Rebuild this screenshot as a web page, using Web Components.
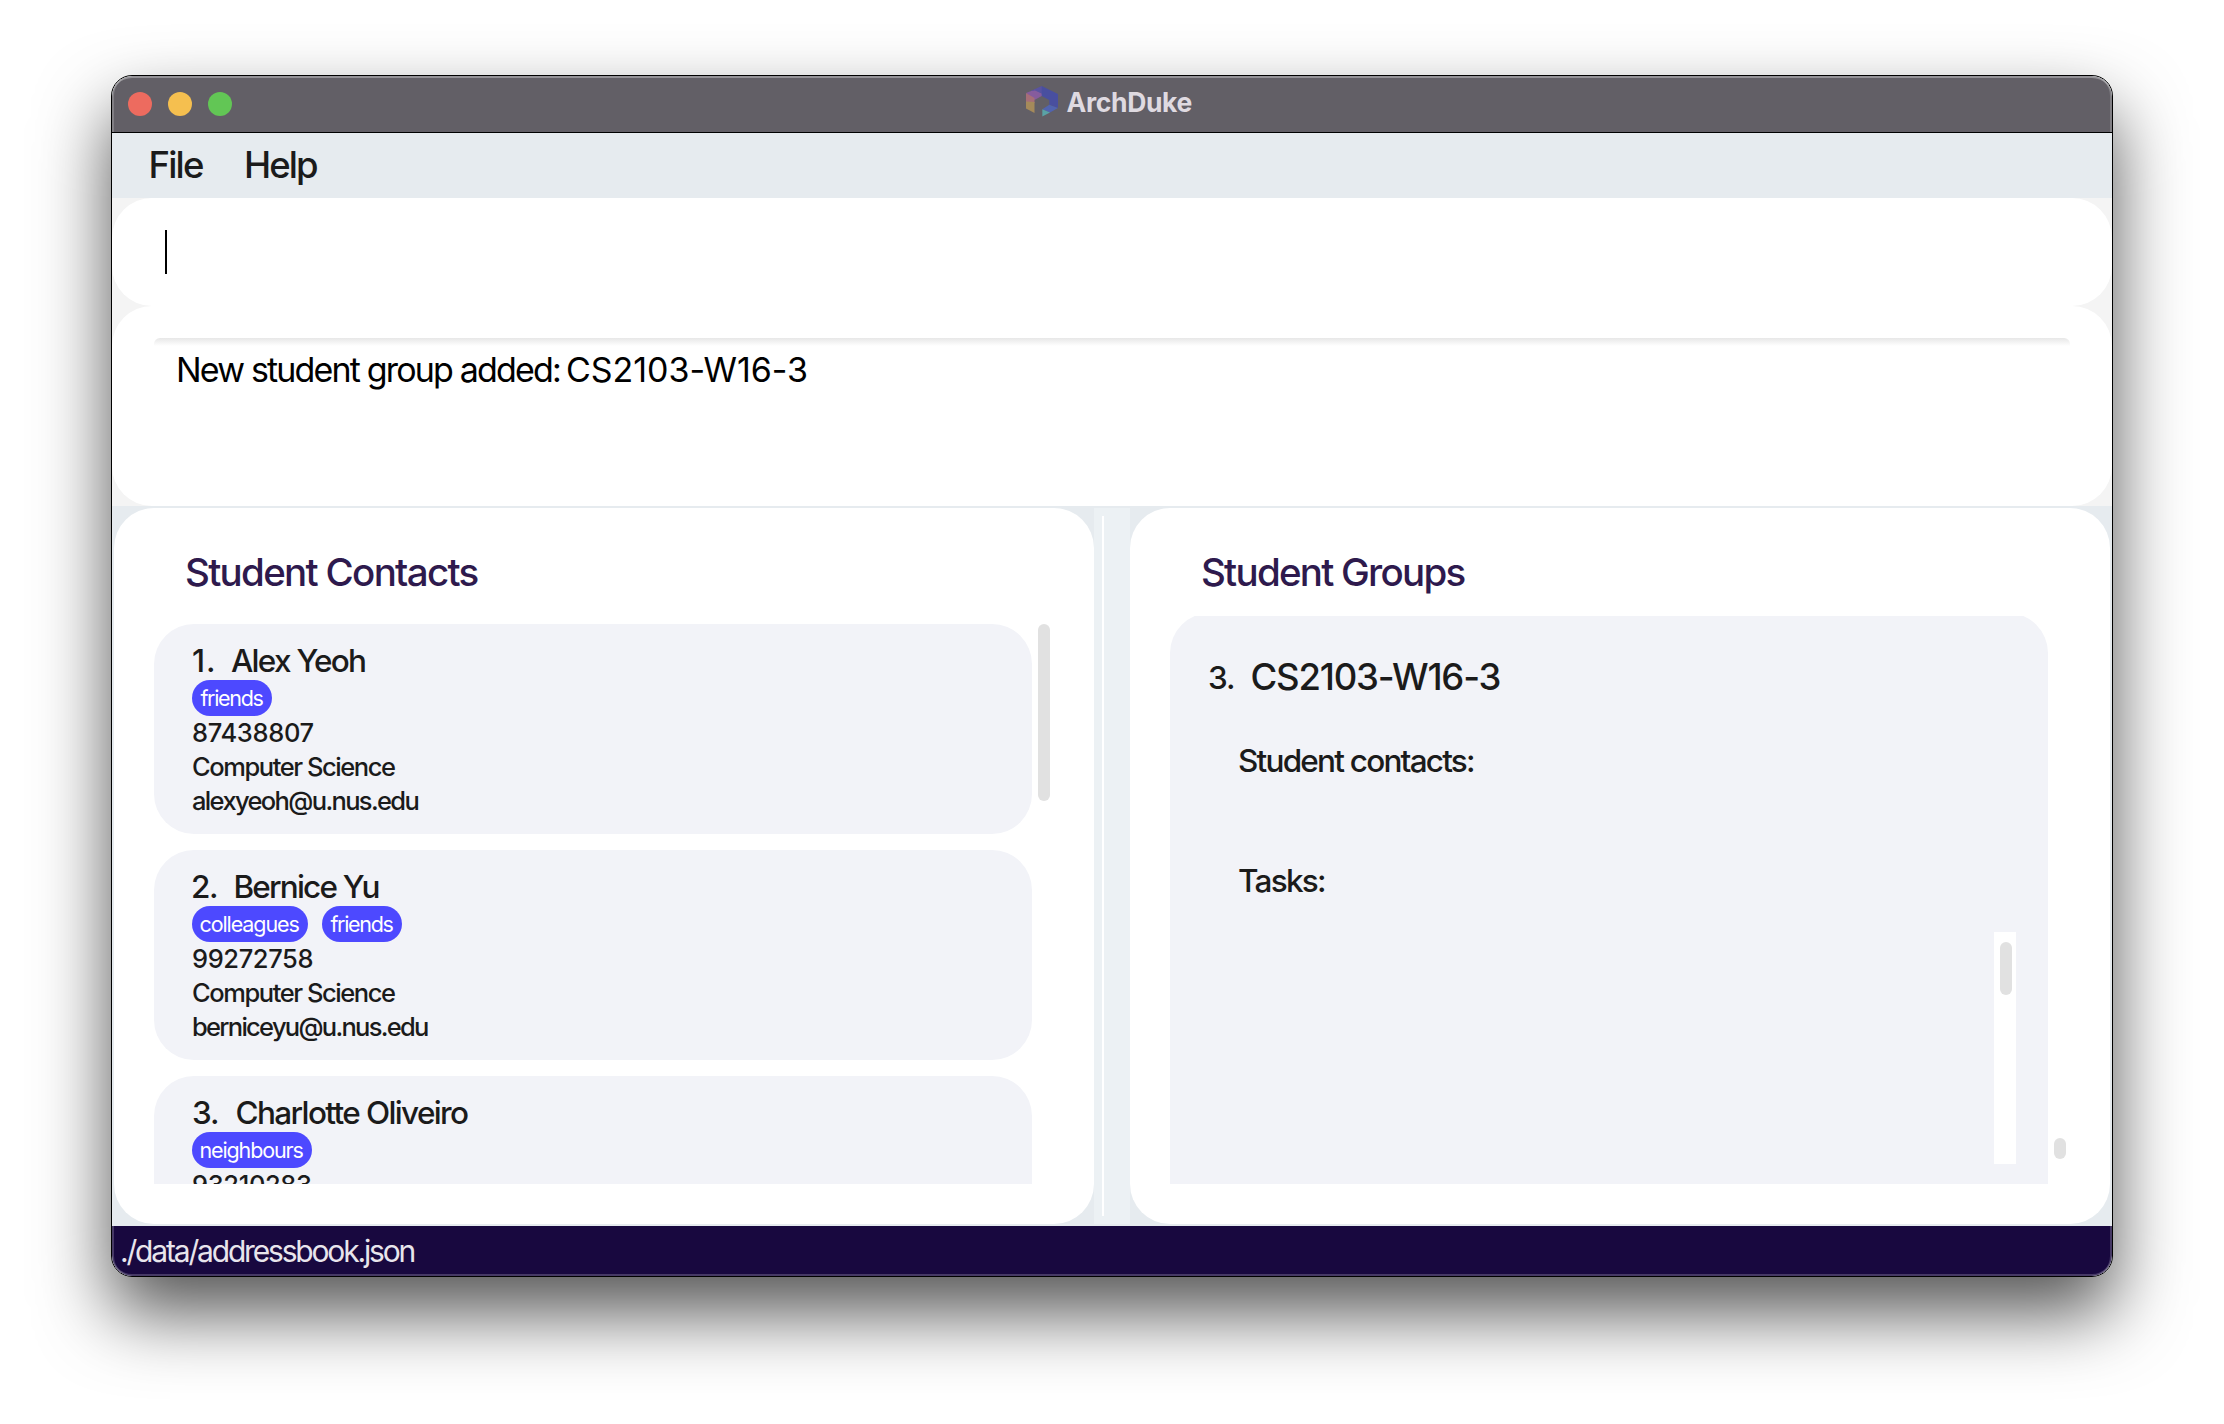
<!DOCTYPE html>
<html lang="en">
<head>
<meta charset="utf-8">
<title>ArchDuke</title>
<style>
html,body{margin:0;height:100%}
body{background:#fff;font-family:Inter,"Liberation Sans",sans-serif;color:#1b1b1b;overflow:hidden}
</style>
</head>
<body>
<app-window>
  <title-bar slot="title">ArchDuke</title-bar>
  <menu-bar slot="menu"></menu-bar>
  <command-box slot="command"></command-box>
  <result-box slot="result" message="New student group added:" subject="CS2103-W16-3"></result-box>
  <split-pane slot="content">
    <list-panel slot="left" heading="Student Contacts" w="291.5" class="contacts">
      <contact-card index="1." iw="21" name="Alex Yeoh" gap="17" nw="134" tags="friends:80:63" phone="87438807" pw="120.5" major="Computer Science" email="alexyeoh@u.nus.edu" ew="225.5"></contact-card>
      <contact-card index="2." iw="24" name="Bernice Yu" gap="18.5" nw="143" tags="colleagues:116:99,friends:80:63" phone="99272758" pw="119.5" major="Computer Science" email="berniceyu@u.nus.edu" ew="235"></contact-card>
      <contact-card index="3." iw="25" name="Charlotte Oliveiro" gap="18.5" nw="231.5" tags="neighbours:120:103" phone="93210283" pw="118"></contact-card>
    </list-panel>
    <list-panel slot="right" heading="Student Groups" w="262.5" class="groups">
      <group-card></group-card>
    </list-panel>
  </split-pane>
  <status-bar slot="status">./data/addressbook.json</status-bar>
</app-window>
<script>
const pen = document.createElement('canvas').getContext('2d');

function define(name, css, html, setup) {
  customElements.define(name, class extends HTMLElement {
    connectedCallback() {
      if (this.shadowRoot) return;
      const root = this.attachShadow({mode: 'open'});
      root.innerHTML = '<style>:host{display:block;box-sizing:border-box}*{box-sizing:border-box}' + css + '</style>' +
        (typeof html === 'function' ? html(this) : html);
      if (setup) setup(this, root);
    }
  });
}

/* One line of text whose letter spacing makes its ink exactly w pixels wide. */
define('fit-text',
  ':host{white-space:pre;flex:none}span{display:block;width:max-content}',
  '<span><slot></slot></span>',
  (el, root) => {
    const text = el.textContent, size = +el.getAttribute('size'), w = +el.getAttribute('w');
    const weight = el.getAttribute('weight') || 450;
    pen.font = weight + ' ' + size + 'px Inter';
    const m = pen.measureText(text);
    const ls = (w - m.actualBoundingBoxLeft - m.actualBoundingBoxRight) / (text.length - 1);
    const s = root.querySelector('span').style;
    s.font = weight + ' ' + size + 'px/' + el.getAttribute('line') + 'px Inter,"Liberation Sans",sans-serif';
    s.letterSpacing = ls.toFixed(3) + 'px';
    s.marginLeft = m.actualBoundingBoxLeft.toFixed(2) + 'px';
    el.style.width = w + 'px';
  });

define('app-window', `
  :host{padding:75px 111px;height:1424px;width:2224px}
  .frame{width:2002px;height:1202px;border:1px solid #000;border-radius:21px;overflow:hidden;display:flex;flex-direction:column;background:#e6ebef}
  .shadow{width:2002px;height:1202px;border-radius:21px;box-shadow:0 36px 72px rgba(0,0,0,.67)}
  `, `<div class="shadow"><div class="frame">
  <slot name="title"></slot><slot name="menu"></slot><slot name="command"></slot><slot name="result"></slot><slot name="content"></slot><slot name="status"></slot>
  </div></div>`);

define('title-bar', `
  :host{height:57px;background:#625f66;border-bottom:1px solid #000;display:flex;padding:17px 16px 0;flex:none;border-radius:20px 20px 0 0;box-shadow:inset 2px 0 rgba(255,255,255,.2),inset -2px 0 rgba(255,255,255,.2),inset 0 2px rgba(255,255,255,.32)}
  .lights{display:flex;gap:16px;width:898px}.lights i{width:24px;height:24px;border-radius:50%;margin-top:-1px}
  svg{width:34px;height:32px;display:block;margin-top:-8px}
  fit-text{margin-left:6.500px;margin-top:-7px;color:#dfdae1}
  `, el => `<div class="lights"><i style="background:#ed6b5f"></i><i style="background:#f5bf4f"></i><i style="background:#62c655"></i></div>
  <svg viewBox="0 0 34 32">
    <path d="M15.700 1 32 9v14l-8.700-3.200V15L15.700 11 9 7z" fill="#494f9f"/>
    <path d="M0 8 9 4.500 15.700 8.500V11L8.500 15z" fill="#865c9d"/>
    <path d="M0 8 8.500 13v5L0 17z" fill="#a66e78"/>
    <path d="M0 16.500 8.500 17v11L0 23.500z" fill="#a58a5a"/>
    <path d="M4 6.200 15.700 1v7.500L9 5.500z" fill="#5953a0"/>
    <path d="M23.300 19.800 32 23l-8 4.500-7.700-3.200z" fill="#5164b0"/>
    <path d="M16.300 24.300 24 27.500l-7.700 4z" fill="#5aa3a6"/>
  </svg><fit-text size="26.500" weight="700" w="125" line="32">${el.textContent}</fit-text>`);

define('menu-bar', `
  :host{height:65px;background:#e6ebef;display:flex;padding:8px 38.500px 0;gap:43px;flex:none}
  `, `<fit-text size="36.500" w="52.500" line="48">File</fit-text><fit-text size="36.500" w="71" line="48">Help</fit-text>`);

define('command-box', `
  :host{height:108px;background:#f4f4f4;flex:none}
  div{height:108px;border-radius:40px;background:#fff;padding:32px 53px}i{display:block;width:2px;height:44px;background:#000}
  `, `<div><i></i></div>`);

define('result-box', `
  :host{height:200px;background:#f4f4f4;flex:none}
  .card{height:200px;border-radius:40px;background:#fff;padding:32px 42px}
  .area{display:flex;gap:8px;border-radius:6px 6px 0 0;height:130px;background:linear-gradient(#e7e7e7,#f3f3f3 4px,#fff 8px);padding:9px 24px;color:#000}
  `, el => `<div class="card"><div class="area"><fit-text size="34" weight="400" w="382" line="46">${el.getAttribute('message')}</fit-text><fit-text size="34" weight="400" w="238" line="46">${el.getAttribute('subject')}</fit-text></div></div>`);

define('split-pane', `
  :host{height:720px;background:#e6ebef;padding:2px;display:flex;flex:none}
  ::slotted(*){flex:none}
  .divider{width:36px;height:716px;background:#ecf1f4;padding:8px;flex:none}.divider i{display:block;width:2px;height:700px;background:#fff}
  `, `<slot name="left"></slot><div class="divider"><i></i></div><slot name="right"></slot>`);

define('list-panel', `
  :host{width:980px;height:716px;border-radius:40px;background:#fff;padding:40px;color:#1b1b1b}
  .head{padding-left:32px;color:#2e1a4d;height:68px}
  .list{display:flex;gap:6px}
  .rows{width:878px;overflow:hidden;display:flex;flex-direction:column;gap:16px}
  :host(.contacts) .rows{height:560px;margin-top:8px}
  :host(.contacts) .thumb{margin-top:8px;height:177px}
  :host(.groups) .rows{height:568px}
  :host(.groups) .thumb{margin-top:522px;height:21px}
  .thumb{width:12px;border-radius:6px;background:#e1e1e1}
  `, el => `<div class="head"><fit-text size="38.500" w="${el.getAttribute('w')}" line="48">${el.getAttribute('heading')}</fit-text></div>
  <div class="list"><div class="rows"><slot></slot></div><div class="thumb"></div></div>`);

define('tag-pill', `
  :host{height:36px;border-radius:18px;background:#4d49ff;color:#fff;padding-left:8.500px}
  `, el => `<fit-text size="21.500" weight="400" w="${el.getAttribute('w')}" line="37">${el.textContent}</fit-text>`);

define('contact-card', `
  :host{height:210px;border-radius:40px;background:#f2f3f8;padding:16px 39px;flex:none}
  .name{display:flex;height:40px}.tags{display:flex;gap:14px;height:36px;margin-left:-1px}
  `, el => {
    const a = n => el.getAttribute(n);
    const row = (text, w) => text ? `<fit-text size="25.500" w="${w}" line="34">${text}</fit-text>` : '';
    return `<div class="name"><fit-text size="31.500" w="${a('iw')}" line="42">${a('index')}</fit-text>
    <fit-text size="31.500" w="${a('nw')}" line="42" style="margin-left:${a('gap')}px">${a('name')}</fit-text></div>
    <div class="tags">${a('tags').split(',').map(t => { const [n, p, w] = t.split(':'); return `<tag-pill style="width:${p}px" w="${w}">${n}</tag-pill>`; }).join('')}</div>
    ${row(a('phone'), a('pw'))}${row(a('major'), 202)}${row(a('email'), a('ew'))}`;
  });

define('group-card', `
  :host{height:612px;margin-top:-3px;border-radius:40px;background:#f2f3f8;padding:39px 32px 0 39px;flex:none}
  .title{display:flex;height:49px;gap:18.500px}
  .body{display:flex;justify-content:space-between;padding-left:30px}
  .labels{display:flex;flex-direction:column;padding-top:40px;gap:80px}
  .track{width:22px;height:232px;background:#fff;margin-top:231px;padding:10px 4px 0 6px}
  .track i{display:block;width:12px;height:53px;border-radius:6px;background:#e1e1e1}
  `, `<div class="title"><fit-text size="31.500" w="25" line="51">3.</fit-text><fit-text size="36.500" w="247" line="50">CS2103-W16-3</fit-text></div>
  <div class="body"><div class="labels"><fit-text size="31.500" w="235" line="40">Student contacts:</fit-text><fit-text size="31.500" w="86" line="40">Tasks:</fit-text></div>
  <div class="track"><i></i></div></div>`);

define('status-bar', `
  :host{height:50px;background:#18083f;color:#e8e5ec;padding:4px 10px;flex:none;border-radius:0 0 20px 20px;box-shadow:inset 2px 0 rgba(255,255,255,.2),inset -2px 0 rgba(255,255,255,.2),inset 0 -2px rgba(255,255,255,.2)}
  `, el => `<fit-text size="30" weight="400" w="292.500" line="42">${el.textContent}</fit-text>`);
</script>
</body>
</html>
